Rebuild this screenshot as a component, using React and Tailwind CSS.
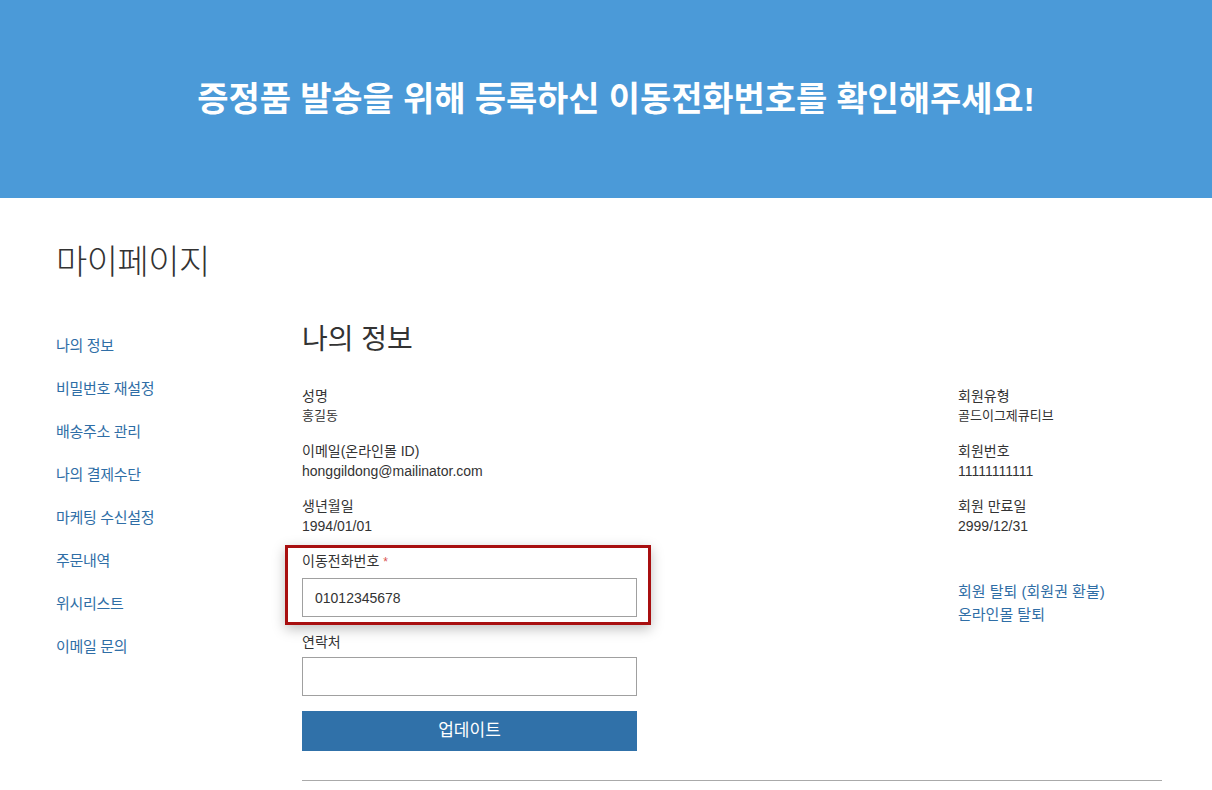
import React from "react";

const FONT = { fontFamily: '"Liberation Sans", "Noto Sans CJK KR", sans-serif' };

const leftFields = [
  { label: "성명", value: "홍길동", ko: true },
  { label: "이메일(온라인몰 ID)", value: "honggildong@mailinator.com" },
  { label: "생년월일", value: "1994/01/01" },
];

const rightFields = [
  { label: "회원유형", value: "골드이그제큐티브", ko: true },
  { label: "회원번호", value: "11111111111" },
  { label: "회원 만료일", value: "2999/12/31" },
];

const menu = [
  "나의 정보",
  "비밀번호 재설정",
  "배송주소 관리",
  "나의 결제수단",
  "마케팅 수신설정",
  "주문내역",
  "위시리스트",
  "이메일 문의",
];

function Field({ label, value, ko }) {
  return (
    <div className="flex flex-col">
      <div className="text-[14px] leading-[20px] text-[#333]">{label}</div>
      <div className={(ko ? "text-[13px]" : "text-[14px]") + " leading-[20px] text-[#333]"}>{value}</div>
    </div>
  );
}

export default function App() {
  return (
    <div className="w-[1212px] min-h-[790px] bg-white overflow-hidden" style={FONT}>
      <div className="h-[198px] bg-[#4b9ad8] flex items-center justify-center pl-[20px]">
        <h1 className="text-[34px] font-bold text-white tracking-[-0.1px] leading-none">
          증정품 발송을 위해 등록하신 이동전화번호를 확인해주세요!
        </h1>
      </div>

      <div className="pl-[56px] pr-[50px] pt-[44px]">
        <div className="text-[34px] leading-[40px] font-light text-[#333] tracking-[-0.5px]">마이페이지</div>

        <div className="flex mt-[40px]">
          <nav className="w-[246px] shrink-0 pt-[2px] flex flex-col">
            {menu.map((m) => (
              <a key={m} className="h-[43px] leading-[43px] text-[15px] tracking-[-0.3px] text-[#2f6ea6] cursor-pointer">
                {m}
              </a>
            ))}
          </nav>

          <div className="flex-1 flex flex-col">
            <h2 className="text-[28px] leading-[36px] text-[#333] font-normal">나의 정보</h2>

            <div className="flex mt-[28px]">
              <div className="w-[656px] shrink-0 flex flex-col">
                <div className="flex flex-col gap-[15px]">
                  {leftFields.map((f) => (
                    <Field key={f.label} {...f} />
                  ))}
                </div>

                <div className="mt-[9px] -ml-[17px] w-[366px] border-[3px] border-[#a80f10] pl-[14px] pr-[11px] pt-[3px] pb-[5px] shadow-[0_4px_12px_rgba(0,0,0,0.25)] bg-white">
                  <div className="text-[14px] leading-[20px] text-[#333]">
                    이동전화번호 <span className="text-[#d9534f] text-[12px]">*</span>
                  </div>
                  <input
                    readOnly
                    value="01012345678"
                    className="mt-[6px] w-[335px] h-[39px] border border-[#a0a0a0] px-[12px] text-[14px] text-[#333] outline-none"
                    style={FONT}
                  />
                </div>

                <div className="mt-[7px] text-[14px] leading-[20px] text-[#333]">연락처</div>
                <input
                  readOnly
                  className="mt-[5px] w-[335px] h-[39px] border border-[#a0a0a0] px-[12px] text-[14px] outline-none"
                  style={FONT}
                />
                <button className="mt-[15px] w-[335px] h-[40px] bg-[#3071a9] text-white text-[17px]">
                  업데이트
                </button>
              </div>

              <div className="flex-1 flex flex-col">
                <div className="flex flex-col gap-[15px]">
                  {rightFields.map((f) => (
                    <Field key={f.label} {...f} />
                  ))}
                </div>
                <div className="mt-[44px] flex flex-col">
                  <a className="text-[15px] leading-[23px] text-[#2f6ea6] cursor-pointer">회원 탈퇴 (회원권 환불)</a>
                  <a className="text-[15px] leading-[23px] text-[#2f6ea6] cursor-pointer">온라인몰 탈퇴</a>
                </div>
              </div>
            </div>

            <div className="mt-[29px] border-t border-[#aaa]"></div>
          </div>
        </div>
      </div>
    </div>
  );
}
